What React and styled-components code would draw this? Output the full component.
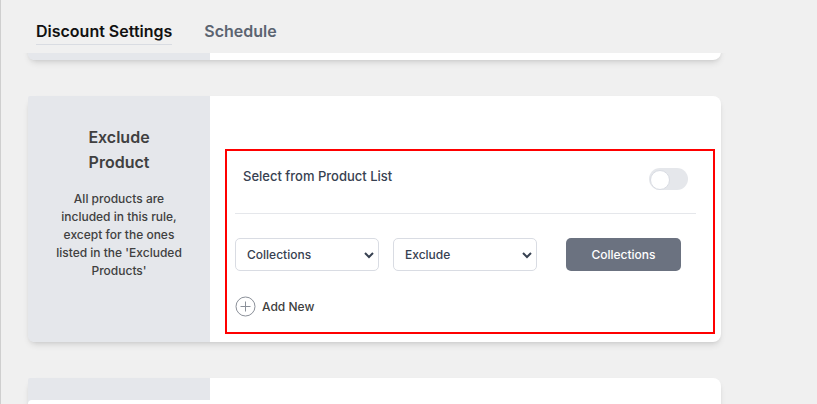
import React, { useState } from 'react';
import styled, { createGlobalStyle } from 'styled-components';

const GlobalStyle = createGlobalStyle`
  * {
    box-sizing: border-box;
  }

  body {
    margin: 0;
    background: #f0f0f0;
    font-family: Inter, 'Liberation Sans', sans-serif;
    font-size: 13px;
    color: #374151;
  }
`;

const Page = styled.div`
  display: flex;
  flex-direction: column;
  height: 100vh;
  border-left: 1px solid #cfcfcf;
`;

const Tabs = styled.nav`
  display: flex;
  gap: 32px;
  padding: 19px 35px 8px;
`;

const Tab = styled.a`
  border-bottom: 1px solid ${props => props.$active ? '#d9dce2' : 'transparent'};
  color: ${props => props.$active ? '#111' : '#5b6470'};
  font-size: 16px;
  font-weight: 600;
  line-height: 25px;
  text-decoration: none;
`;

const Content = styled.main`
  position: relative;
  flex: 1;
  min-height: 0;
  overflow: hidden;
  padding: 0 96px 0 27px;
`;

const Cards = styled.div`
  display: flex;
  flex-direction: column;
  gap: 36px;
  margin-top: -33px;
`;

const Card = styled.section`
  display: flex;
  min-height: 40px;
  border-radius: 8px;
  background: #fff;
  box-shadow: 0 4px 6px -1px rgba(0, 0, 0, 0.1), 0 2px 4px -2px rgba(0, 0, 0, 0.1);
`;

const Side = styled.div`
  flex: none;
  width: 182px;
  padding: 29px 24px 62px;
  border-radius: 2px 0 0 6px;
  background: #e5e7eb;
  color: #404040;
  text-align: center;

  &:empty {
    padding: 0;
  }

  h2 {
    margin: 0 24px 15px;
    font-size: 16px;
    font-weight: 600;
    line-height: 25px;
  }

  p {
    margin: 0;
    font-size: 12px;
    font-weight: 500;
    line-height: 18px;
  }
`;

const Body = styled.div`
  display: flex;
  flex: 1;
  padding: 53px 6px 8px 15px;
`;

const Highlight = styled.div`
  flex: 1;
  padding: 15px 17px 0 8px;
  border: 2px solid #f00;
`;

const ToggleRow = styled.div`
  display: flex;
  justify-content: space-between;
  padding: 0 8px 23px;
  border-bottom: 1px solid #e5e7eb;

  label {
    font-weight: 500;
    line-height: 20px;
  }
`;

const Switch = styled.input`
  appearance: none;
  width: 39px;
  height: 22px;
  margin: 2px 0 0;
  padding: 2px 1px;
  border-radius: 11px;
  background: #e5e7eb;
  cursor: pointer;

  &::before {
    content: '';
    display: block;
    width: 18px;
    height: 18px;
    border: 1px solid #d9dce3;
    border-radius: 50%;
    background: #fff;
  }

  &:checked {
    background: #6b7280;
  }

  &:checked::before {
    margin-left: auto;
  }
`;

const Filters = styled.div`
  display: flex;
  gap: 14px;
  padding: 24px 15px 0 0;
`;

const SelectBox = styled.div`
  position: relative;
  flex: 1;

  select {
    appearance: none;
    width: 100%;
    height: 33px;
    padding: 0 24px 0 11px;
    border: 1px solid #d9dce3;
    border-radius: 5px;
    background: #fff;
    color: #374151;
    font: inherit;
    font-size: 12px;
    font-weight: 500;
  }

  svg {
    position: absolute;
    top: 13px;
    right: 5px;
    pointer-events: none;
  }
`;

const PickButton = styled.button`
  width: 115px;
  height: 33px;
  margin-left: 15px;
  border: 0;
  border-radius: 5px;
  background: #6b7280;
  color: #fff;
  font: inherit;
  font-size: 12px;
  font-weight: 500;
`;

const AddButton = styled.button`
  display: flex;
  align-items: center;
  gap: 6px;
  margin-top: 25px;
  padding: 0;
  border: 0;
  background: none;
  color: #404040;
  font: inherit;
  font-size: 12px;
  font-weight: 500;
`;

const BottomBar = styled.footer`
  position: absolute;
  right: 96px;
  bottom: 0;
  left: 27px;
  height: 4px;
  border-radius: 8px 8px 0 0;
  background: #fff;
`;

function Select({ label, options }) {
  return (
      <SelectBox>
        <select aria-label={label}>
          {options.map(option => <option key={option}>{option}</option>)}
        </select>
        <svg width='10' height='8' viewBox='0 0 10 8' fill='none'>
          <path d='M1 2L5 6L9 2' stroke='#374151' strokeWidth='2' />
        </svg>
      </SelectBox>
  );
}

export default function App() {
  const [fromList, setFromList] = useState(false);

  return (
      <Page>
        <GlobalStyle />
        <Tabs>
          <Tab href='#discount' $active>Discount Settings</Tab>
          <Tab href='#schedule'>Schedule</Tab>
        </Tabs>
        <Content>
          <Cards>
            <Card><Side /></Card>
            <Card>
              <Side>
                <h2>Exclude Product</h2>
                <p>All products are included in this rule, except for the ones listed in the 'Excluded Products'</p>
              </Side>
              <Body>
                <Highlight>
                  <ToggleRow>
                    <label htmlFor='fromList'>Select from Product List</label>
                    <Switch
                        id='fromList'
                        type='checkbox'
                        role='switch'
                        checked={fromList}
                        onChange={e => setFromList(e.target.checked)}
                    />
                  </ToggleRow>
                  <Filters>
                    <Select label='Filter by' options={['Collections', 'Products']} />
                    <Select label='Condition' options={['Exclude', 'Include']} />
                    <PickButton type='button'>Collections</PickButton>
                  </Filters>
                  <AddButton type='button'>
                    <svg width='21' height='21' viewBox='0 0 21 21' fill='none'>
                      <circle cx='10.5' cy='10.5' r='9.5' stroke='#8b9099' />
                      <path d='M5.5 10.5H15.5M10.5 5.5V15.5' stroke='#8b9099' />
                    </svg>
                    Add New
                  </AddButton>
                </Highlight>
              </Body>
            </Card>
            <Card><Side /></Card>
          </Cards>
          <BottomBar />
        </Content>
      </Page>
  );
}
